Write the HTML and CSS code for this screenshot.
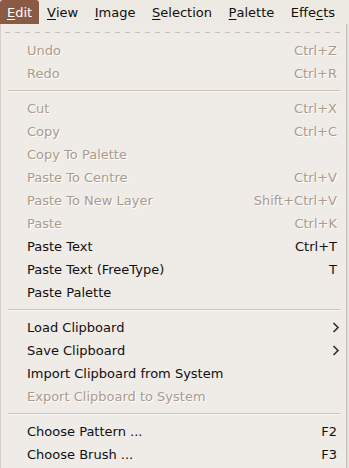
FILE: index.html
```html
<!DOCTYPE html>
<html>
<head>
<meta charset="utf-8">
<link rel="stylesheet" href="styles.css">
</head>
<body>
<div class="menubar">
  <span class="mb-item active"><u>E</u>dit</span>
  <span class="mb-item"><u>V</u>iew</span>
  <span class="mb-item"><u>I</u>mage</span>
  <span class="mb-item"><u>S</u>election</span>
  <span class="mb-item"><u>P</u>alette</span>
  <span class="mb-item">Effe<u>c</u>ts</span>
</div>
<div class="menu">
  <div class="tearoff"></div>
  <div class="row dis"><span>Undo</span><span class="sc">Ctrl+Z</span></div>
  <div class="row dis"><span>Redo</span><span class="sc">Ctrl+R</span></div>
  <div class="sep"></div>
  <div class="row dis"><span>Cut</span><span class="sc">Ctrl+X</span></div>
  <div class="row dis"><span>Copy</span><span class="sc">Ctrl+C</span></div>
  <div class="row dis"><span>Copy To Palette</span></div>
  <div class="row dis"><span>Paste To Centre</span><span class="sc">Ctrl+V</span></div>
  <div class="row dis"><span>Paste To New Layer</span><span class="sc">Shift+Ctrl+V</span></div>
  <div class="row dis"><span>Paste</span><span class="sc">Ctrl+K</span></div>
  <div class="row"><span>Paste Text</span><span class="sc">Ctrl+T</span></div>
  <div class="row"><span>Paste Text (FreeType)</span><span class="sc">T</span></div>
  <div class="row"><span>Paste Palette</span></div>
  <div class="sep"></div>
  <div class="row"><span>Load Clipboard</span><svg class="arrow" width="8" height="11" viewBox="0 0 8 11"><path d="M1.5 1 L6 5.5 L1.5 10" fill="none" stroke="#2e2e2e" stroke-width="1.6"/></svg></div>
  <div class="row"><span>Save Clipboard</span><svg class="arrow" width="8" height="11" viewBox="0 0 8 11"><path d="M1.5 1 L6 5.5 L1.5 10" fill="none" stroke="#2e2e2e" stroke-width="1.6"/></svg></div>
  <div class="row"><span>Import Clipboard from System</span></div>
  <div class="row dis"><span>Export Clipboard to System</span></div>
  <div class="sep"></div>
  <div class="row"><span>Choose Pattern ...</span><span class="sc">F2</span></div>
  <div class="row"><span>Choose Brush ...</span><span class="sc">F3</span></div>
</div>
</body>
</html>
```

FILE: styles.css
```css
html, body {
  margin: 0;
  padding: 0;
  background: #efebe7;
  width: 349px;
  height: 468px;
  overflow: hidden;
}
body {
  font-family: "DejaVu Sans", sans-serif;
  font-size: 13px;
  color: #101010;
}
.menubar {
  height: 24px;
  background: #ede9e3;
  display: flex;
  align-items: stretch;
}
.mb-item {
  display: flex;
  align-items: center;
  padding: 0 8.6px 0 7px;
  color: #101010;
  margin-right: 1px;
}
.mb-item u {
  text-decoration-thickness: 1px;
  text-underline-offset: 2px;
}
.mb-item.active {
  background: #8b5a45;
  color: #ffffff;
  border-radius: 3px 3px 0 0;
  width: 24px;
  padding-right: 8px;
}
.menu {
  width: 347px;
  border-right: 1px solid #c8bfb5;
  border-left: 1px solid #d8d0c6;
  box-sizing: border-box;
  background: #efebe7;
  height: 444px;
  box-shadow: 1px 0 0 #ddd6cd;
}
.tearoff {
  height: 15px;
  margin: 0 2px;
  background-image: linear-gradient(to right, #c9c1b8 50%, transparent 50%);
  background-size: 10px 1px;
  background-repeat: repeat-x;
  background-position: 2px 8px;
}
.row {
  height: 23px;
  display: flex;
  align-items: center;
  justify-content: space-between;
  padding: 0 9px 0 26px;
}
.row.dis {
  color: #ab9b8d;
  text-shadow: 1px 1px 0 #ffffff;
}
.sc {
  text-align: right;
}
.arrow {
  margin-right: -3px;
}
.sep {
  height: 12px;
  display: flex;
  align-items: center;
  padding: 0 6px 0 7px;
}
.sep::before {
  content: "";
  display: block;
  flex: 1;
  height: 1px;
  background: #cfc3b6;
  border-bottom: 1px solid #f8f6f3;
}
```
